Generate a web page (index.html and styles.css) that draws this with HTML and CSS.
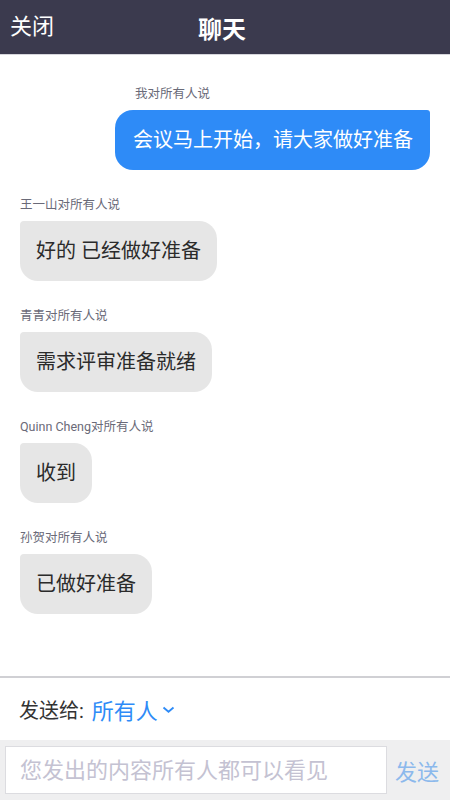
FILE: index.html
```html
<!DOCTYPE html>
<html lang="zh">
<head>
    <meta charset="UTF-8">
    <title>聊天</title>
    <link rel="stylesheet" href="styles.css">
</head>
<body>
<div class="page">
    <div class="header">
        <a href="#" class="close">关闭</a>
        <div class="title">聊天</div>
    </div>

    <div class="messages">
        <div class="msg mine">
            <div class="who">我对所有人说</div>
            <div class="bubble">会议马上开始，请大家做好准备</div>
        </div>
        <div class="msg">
            <div class="who">王一山对所有人说</div>
            <div class="bubble">好的 已经做好准备</div>
        </div>
        <div class="msg">
            <div class="who">青青对所有人说</div>
            <div class="bubble">需求评审准备就绪</div>
        </div>
        <div class="msg">
            <div class="who">Quinn Cheng对所有人说</div>
            <div class="bubble">收到</div>
        </div>
        <div class="msg">
            <div class="who">孙贺对所有人说</div>
            <div class="bubble">已做好准备</div>
        </div>
    </div>

    <div class="target">
        发送给: <span class="to">所有人</span>
        <svg class="arrow" width="13" height="8" viewBox="0 0 13 8">
            <polyline points="1.5,1.5 6.5,5.8 11.5,1.5" fill="none" stroke="#2e8bf7" stroke-width="1.8"/>
        </svg>
    </div>

    <div class="send">
        <input type="text" class="box" placeholder="您发出的内容所有人都可以看见">
        <a href="#" class="btn">发送</a>
    </div>
</div>
</body>
</html>
```

FILE: styles.css
```css
*{
    box-sizing: border-box;
}
body{
    margin: 0;
    font-family: Roboto, "Noto Sans CJK SC", sans-serif;
    background-color: white;
}
a{
    text-decoration: none;
}
.page{
    height: 800px;
    display: flex;
    flex-direction: column;
}
.header{
    height: 55px;
    background-color: #3b3a4e;
    border-bottom: 1px solid #d6d6dc;
    display: flex;
    align-items: center;
    justify-content: center;
    position: relative;
    color: white;
}
.close{
    position: absolute;
    left: 10px;
    top: 11px;
    color: white;
    font-size: 22px;
    line-height: 32px;
}
.title{
    font-size: 24px;
    font-weight: bold;
    margin-left: -6px;
}
.messages{
    flex: 1;
    padding: 31px 20px 0 20px;
    display: flex;
    flex-direction: column;
}
.msg{
    display: flex;
    flex-direction: column;
    align-items: flex-start;
    margin-bottom: 27px;
}
.who{
    font-size: 12.5px;
    line-height: 16px;
    color: #6a6a78;
    margin-bottom: 8px;
}
.bubble{
    font-size: 20px;
    line-height: 28px;
    padding: 16px 16px;
    background-color: #e6e6e6;
    color: #2b2b2b;
    border-radius: 4px 18px 18px 18px;
}
.mine{
    align-self: flex-end;
}
.mine .who{
    padding-left: 20px;
}
.mine .bubble{
    background-color: #2e8bf7;
    color: white;
    padding: 16px 17px 16px 18px;
    border-radius: 18px 3px 18px 18px;
}
.target{
    height: 64px;
    border-top: 2px solid #d0d0d4;
    padding-left: 19px;
    display: flex;
    align-items: center;
    font-size: 20px;
    color: #333;
}
.to{
    color: #2e8bf7;
    font-size: 22px;
    margin-left: 8px;
}
.arrow{
    margin-left: 4px;
    margin-top: 2px;
}
.send{
    height: 60px;
    background-color: #efeff0;
    display: flex;
    align-items: center;
    padding: 0 5px;
}
.box{
    width: 382px;
    height: 48px;
    border: 1px solid #dcdce0;
    background-color: white;
    font-family: Roboto, "Noto Sans CJK SC", sans-serif;
    font-size: 22px;
    padding: 0 14px;
    outline: none;
}
.box::placeholder{
    color: #c4c2d2;
}
.btn{
    margin-left: 8px;
    font-size: 22px;
    color: #8cb9ec;
}
```
